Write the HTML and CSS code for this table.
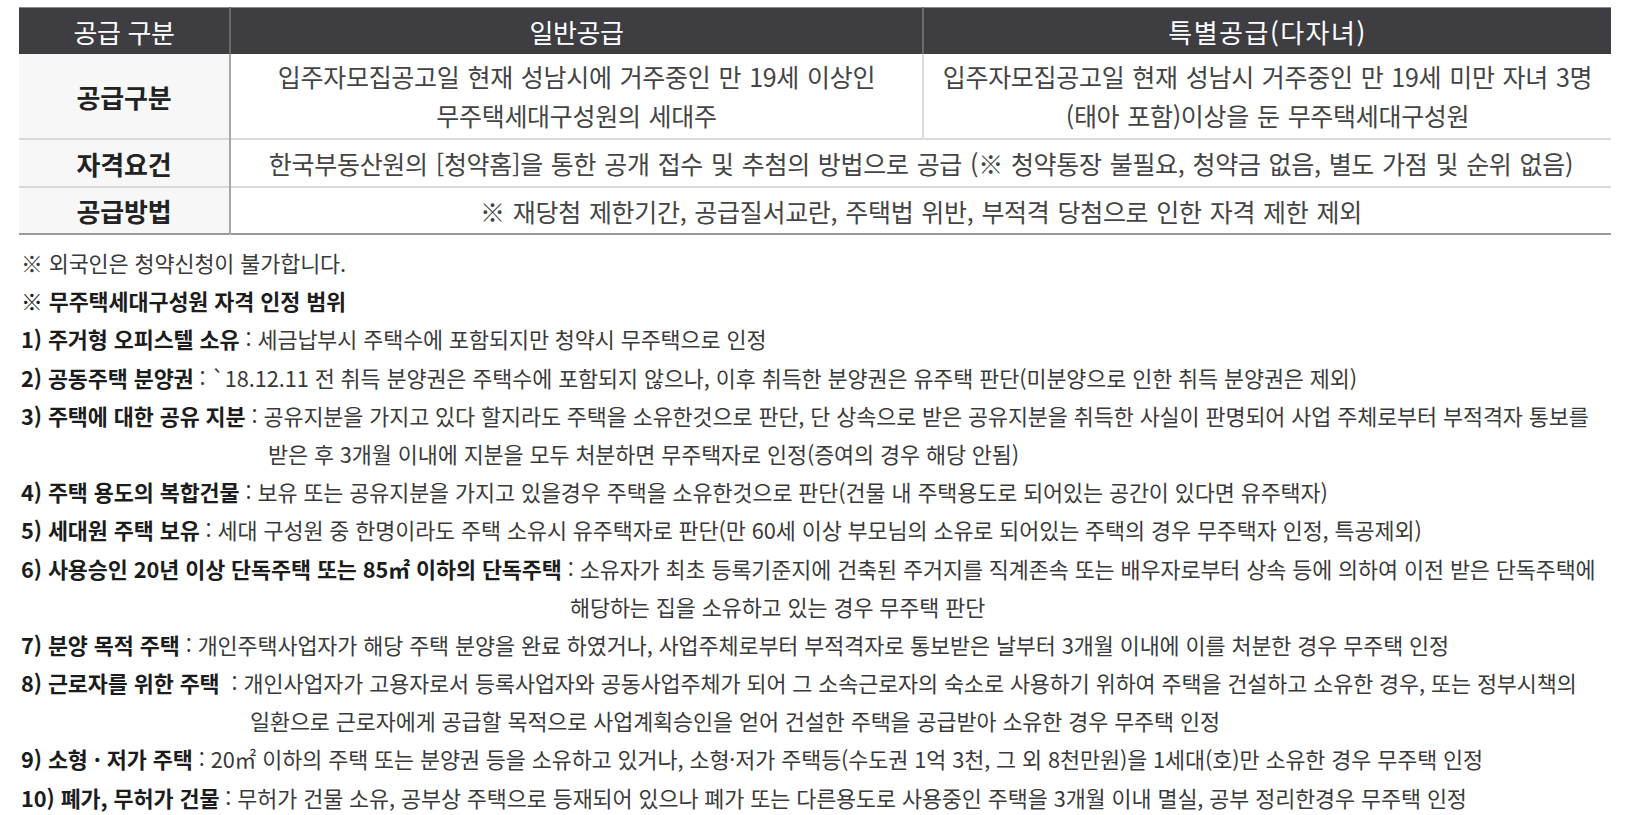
FILE: index.html
```html
<!DOCTYPE html>
<html lang="ko">
<head>
<meta charset="utf-8">
<title>공급 구분</title>
<link rel="stylesheet" href="styles.css">
</head>
<body>
<div class="page">
  <table class="supply">
    <colgroup>
      <col class="col-a">
      <col class="col-b">
      <col class="col-c">
    </colgroup>
    <thead>
      <tr class="head">
        <th>공급 구분</th>
        <th>일반공급</th>
        <th class="wide">특별공급(다자녀)</th>
      </tr>
    </thead>
    <tbody>
      <tr class="r1">
        <th>공급구분</th>
        <td>입주자모집공고일 현재 성남시에 거주중인 만 19세 이상인<br>무주택세대구성원의 세대주</td>
        <td>입주자모집공고일 현재 성남시 거주중인 만 19세 미만 자녀 3명<br>(태아 포함)이상을 둔 무주택세대구성원</td>
      </tr>
      <tr class="r2">
        <th>자격요건</th>
        <td colspan="2">한국부동산원의 [청약홈]을 통한 공개 접수 및 추첨의 방법으로 공급 (※ 청약통장 불필요, 청약금 없음, 별도 가점 및 순위 없음)</td>
      </tr>
      <tr class="r3">
        <th>공급방법</th>
        <td colspan="2">※ 재당첨 제한기간, 공급질서교란, 주택법 위반, 부적격 당첨으로 인한 자격 제한 제외</td>
      </tr>
    </tbody>
  </table>

  <div class="notes">
    <p class="line">※ 외국인은 청약신청이 불가합니다.</p>
    <p class="line"><b>※ 무주택세대구성원 자격 인정 범위</b></p>
    <p class="line"><b>1) 주거형 오피스텔 소유</b> : 세금납부시 주택수에 포함되지만 청약시 무주택으로 인정</p>
    <p class="line"><b>2) 공동주택 분양권</b> : `18.12.11 전 취득 분양권은 주택수에 포함되지 않으나, 이후 취득한 분양권은 유주택 판단(미분양으로 인한 취득 분양권은 제외)</p>
    <p class="line"><b>3) 주택에 대한 공유 지분</b> : 공유지분을 가지고 있다 할지라도 주택을 소유한것으로 판단, 단 상속으로 받은 공유지분을 취득한 사실이 판명되어 사업 주체로부터 부적격자 통보를</p>
    <p class="line cont cont-3">받은 후 3개월 이내에 지분을 모두 처분하면 무주택자로 인정(증여의 경우 해당 안됨)</p>
    <p class="line"><b>4) 주택 용도의 복합건물</b> : 보유 또는 공유지분을 가지고 있을경우 주택을 소유한것으로 판단(건물 내 주택용도로 되어있는 공간이 있다면 유주택자)</p>
    <p class="line"><b>5) 세대원 주택 보유</b> : 세대 구성원 중 한명이라도 주택 소유시 유주택자로 판단(만 60세 이상 부모님의 소유로 되어있는 주택의 경우 무주택자 인정, 특공제외)</p>
    <p class="line"><b>6) 사용승인 20년 이상 단독주택 또는 85㎡ 이하의 단독주택</b> : 소유자가 최초 등록기준지에 건축된 주거지를 직계존속 또는 배우자로부터 상속 등에 의하여 이전 받은 단독주택에</p>
    <p class="line cont cont-6">해당하는 집을 소유하고 있는 경우 무주택 판단</p>
    <p class="line"><b>7) 분양 목적 주택</b> : 개인주택사업자가 해당 주택 분양을 완료 하였거나, 사업주체로부터 부적격자로 통보받은 날부터 3개월 이내에 이를 처분한 경우 무주택 인정</p>
    <p class="line"><b>8) 근로자를 위한 주택</b> &nbsp;: 개인사업자가 고용자로서 등록사업자와 공동사업주체가 되어 그 소속근로자의 숙소로 사용하기 위하여 주택을 건설하고 소유한 경우, 또는 정부시책의</p>
    <p class="line cont cont-8">일환으로 근로자에게 공급할 목적으로 사업계획승인을 얻어 건설한 주택을 공급받아 소유한 경우 무주택 인정</p>
    <p class="line"><b>9) 소형 · 저가 주택</b> : 20㎡ 이하의 주택 또는 분양권 등을 소유하고 있거나, 소형·저가 주택등(수도권 1억 3천, 그 외 8천만원)을 1세대(호)만 소유한 경우 무주택 인정</p>
    <p class="line"><b>10) 폐가, 무허가 건물</b> : 무허가 건물 소유, 공부상 주택으로 등재되어 있으나 폐가 또는 다른용도로 사용중인 주택을 3개월 이내 멸실, 공부 정리한경우 무주택 인정</p>
  </div>
</div>
</body>
</html>
```

FILE: styles.css
```css
html, body {
  margin: 0;
  padding: 0;
  background: #ffffff;
}

body {
  font-family: "Noto Sans CJK KR", "Noto Sans", sans-serif;
  color: #3a3a3a;
}

.page {
  padding: 7px 0 0 19px;
}

.supply {
  width: 1592px;
  border-collapse: collapse;
  table-layout: fixed;
}

.col-a { width: 211px; }
.col-b { width: 693px; }
.col-c { width: 688px; }

.supply th,
.supply td {
  padding: 0;
  text-align: center;
  vertical-align: middle;
  white-space: nowrap;
}

.head th {
  height: 46px;
  background: #3e3e42;
  color: #ffffff;
  font-weight: 400;
  font-size: 26px;
  letter-spacing: -0.4px;
  border-top: 1px solid #8a8a8a;
  border-right: 2px solid #6a6a6e;
}

.head th.wide {
  letter-spacing: 1.5px;
}

.head th:last-child {
  border-right: none;
}

.supply tbody th {
  background: #f7f7f7;
  color: #222222;
  font-weight: 700;
  font-size: 26px;
  letter-spacing: -0.2px;
  border-right: 2px solid #a8a8a8;
}

.supply tbody td {
  color: #444444;
  font-size: 25px;
  letter-spacing: -0.3px;
  word-spacing: 1.3px;
}

.supply tbody tr {
  border-bottom: 2px solid #d8d8d8;
}

.supply tbody tr:last-child {
  border-bottom: 2px solid #9a9a9a;
}

.r1 th, .r1 td {
  height: 84px;
  line-height: 39px;
}

.r1 td + td {
  border-left: 2px solid #dcdcdc;
}

.r2 th, .r2 td {
  height: 46px;
}

.r2 td {
  word-spacing: 0;
}

.r3 th, .r3 td {
  height: 45px;
}

.notes {
  margin-top: 9px;
  padding-left: 2px;
  font-size: 21.8px;
  letter-spacing: -0.1px;
}

.line {
  margin: 0;
  height: 38.2px;
  line-height: 38.2px;
  white-space: nowrap;
}

.line b {
  color: #1c1c1c;
  font-weight: 700;
}

.cont-3 { padding-left: 247px; }
.cont-6 { padding-left: 549px; }
.cont-8 { padding-left: 229px; }
```
